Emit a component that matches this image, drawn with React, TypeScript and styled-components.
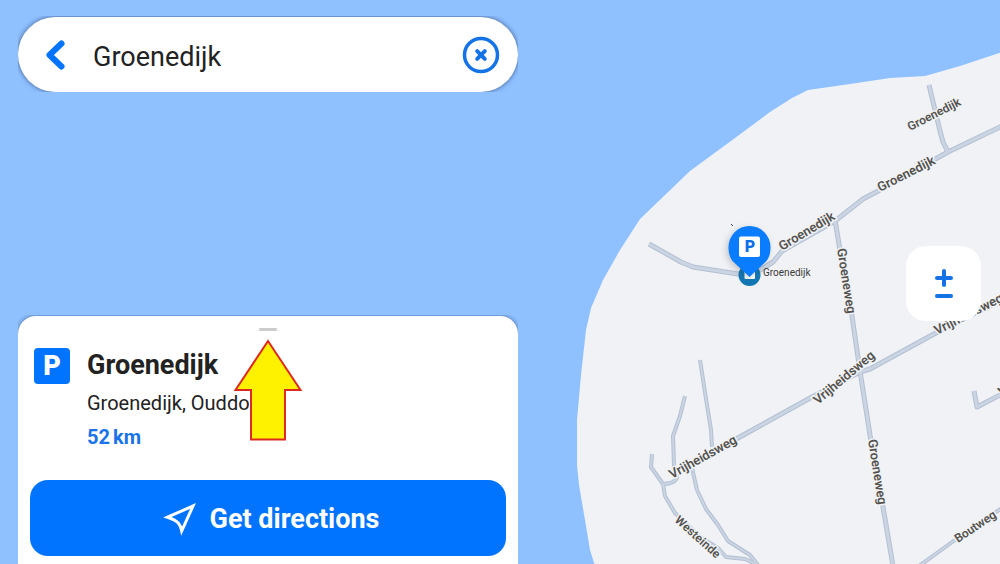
import React, { useState } from "react";
import styled, { createGlobalStyle } from "styled-components";

const BLUE = "#0073ff";
const LAND = "#f0f2f6";

const GlobalStyle = createGlobalStyle`
  * { box-sizing: border-box; }
  body {
    margin: 0;
    background: #8fc0ff;
    color: #222;
    font-family: Roboto, "Noto Sans", sans-serif;
  }
`;

const Screen = styled.main`
  position: relative;
  display: flex;
  justify-content: space-between;
  min-height: 100vh;
  padding: 0 19px 0 18px;
  overflow: hidden;
`;

const MapCanvas = styled.svg`
  position: absolute;
  inset: 0;
  width: 100%;
  height: 100%;
`;

const RoadCasing = styled.path`
  fill: none;
  stroke: #b3c0d3;
  stroke-linejoin: round;
`;

const RoadFill = styled(RoadCasing)`
  stroke: #cbd4e2;
`;

const RoadLabel = styled.text`
  font-weight: 600;
  fill: #55524e;
  stroke: ${LAND};
  stroke-width: 3px;
  stroke-linejoin: round;
  paint-order: stroke;
`;

const PlaceLabel = styled.text`
  font-size: 10px;
  fill: #3a3a3a;
`;

const PinShape = styled.path`
  fill: #0a7cff;
  filter: drop-shadow(-2px 2px 3px rgba(60, 60, 60, 0.25));
`;

const PinLetter = styled.text`
  font-size: 16px;
  font-weight: 900;
  fill: #0a6fe8;
  text-anchor: middle;
`;

const Column = styled.div`
  position: relative;
  display: flex;
  flex-direction: column;
  justify-content: space-between;
  gap: 24px;
  width: 52%;
  max-width: 500px;
  padding-top: 17px;
`;

const SearchBar = styled.form`
  display: flex;
  align-items: center;
  height: 75px;
  padding: 0 18px 0 24px;
  border-radius: 38px;
  background: #fff;
  box-shadow: 0 0 5px rgba(0, 20, 60, 0.6);
  clip-path: inset(-1px 0 0 0);
`;

const IconButton = styled.button`
  display: flex;
  flex: none;
  padding: 0;
  border: 0;
  background: none;
  color: ${BLUE};
  cursor: pointer;
`;

const SearchInput = styled.input`
  flex: 1;
  min-width: 0;
  padding: 4px 0 0;
  margin-left: 23px;
  border: 0;
  outline: 0;
  background: none;
  color: #222;
  font: 400 27px/36px Roboto, "Noto Sans", sans-serif;
`;

const Sheet = styled.section`
  position: relative;
  display: flex;
  flex-direction: column;
  padding: 12px 12px 8px;
  border-radius: 18px 18px 0 0;
  background: #fff;
  box-shadow: 0 0 5px rgba(0, 20, 60, 0.5);
  clip-path: inset(-1px 0 0 0);
`;

const Handle = styled.span`
  align-self: center;
  width: 18px;
  height: 3px;
  border-radius: 1px;
  background: #ccc;
`;

const Place = styled.div`
  display: flex;
  gap: 17px;
  padding: 16px 4px 26px;
`;

const ParkingBadge = styled.span`
  display: flex;
  flex: none;
  align-items: center;
  justify-content: center;
  width: 36px;
  height: 36px;
  margin-top: 1px;
  border-radius: 4px;
  background: ${BLUE};
  color: #fff;
  font-size: 27px;
  font-weight: 900;
`;

const Title = styled.h1`
  margin: 0;
  font-size: 27px;
  font-weight: 700;
  line-height: 36px;
`;

const Address = styled.p`
  margin: 3px 0 0;
  font-size: 20px;
  line-height: 34px;
`;

const Distance = styled.p`
  display: flex;
  gap: 3px;
  margin: 0;
  color: #1a73e8;
  font-size: 20px;
  font-weight: 700;
  line-height: 34px;
`;

const DirectionsButton = styled.button`
  display: flex;
  align-items: center;
  justify-content: center;
  gap: 13px;
  height: 76px;
  padding: 2px 0 0 6px;
  border: 0;
  border-radius: 18px;
  background: ${BLUE};
  color: #fff;
  font: 700 27px/36px Roboto, "Noto Sans", sans-serif;
  cursor: pointer;
`;

const Pointer = styled.svg`
  position: absolute;
  top: 22px;
  left: 50%;
  width: 70px;
  height: 104px;
  transform: translateX(-50%);
  pointer-events: none;
`;

const ZoomButton = styled(IconButton)`
  position: relative;
  align-self: center;
  align-items: center;
  justify-content: center;
  width: 75px;
  height: 75px;
  margin-top: 3px;
  border-radius: 20px;
  background: #fff;
`;

const roads: { d: string; width: number }[] = [
  { d: "M697 490 L706 509 L718 525 L728 541 L750 555 L758 565", width: 4 },
  { d: "M692 468 L697 490", width: 4 },
  { d: "M700 360 L707 405 L711 430 L712 447", width: 4 },
  { d: "M685 396 L680 416 L673 436 L674 465 L677 478 Q674 484 663 484", width: 4 },
  { d: "M652 454 L651 467 L663 484 L665 496 L675 513 L700 537 L718 548 L726 557 L745 559 L758 565", width: 4 },
  { d: "M649 244 L681 262 L693 267 L738 274 L760 270 L773 262 L782 251 L835 221 L863 199 L880 190 L948 152 L1002 126", width: 5 },
  { d: "M929 85 L935 110 L940 131 L943 142 L948 152", width: 5 },
  { d: "M835 220 L840 250 L852 316 L860 371 L870 435 L883 507 L893 566", width: 5 },
  { d: "M690 465 L738 438 L812 397 L860 372 L870 369 L934 334 L1002 300", width: 5 },
  { d: "M974 391 L977 407 L1002 394", width: 5 },
  { d: "M1002 508 L955 540 L919 566", width: 4 },
];

const labels: { text: string; x: number; y: number; angle: number; size: number }[] = [
  { text: "Groenedijk", x: 910, y: 131, angle: -27, size: 12 },
  { text: "Groenedijk", x: 880, y: 192, angle: -27, size: 13 },
  { text: "Groenedijk", x: 782, y: 251, angle: -31, size: 13 },
  { text: "Groeneweg", x: 837, y: 249, angle: 81, size: 13 },
  { text: "Groeneweg", x: 868, y: 440, angle: 81, size: 13 },
  { text: "Vrijheidsweg", x: 818, y: 405, angle: -40, size: 13 },
  { text: "Vrijheidsweg", x: 672, y: 479, angle: -29, size: 13 },
  { text: "Vrijheidsweg", x: 937, y: 335, angle: -27, size: 13 },
  { text: "Westeinde", x: 674, y: 521, angle: 42, size: 12 },
  { text: "Boutweg", x: 958, y: 543, angle: -34, size: 12 },
  { text: "Vrijheidsweg", x: 1001, y: 397, angle: -27, size: 13 },
];

function IslandMap() {
  return (
    <MapCanvas viewBox="0 0 1000 564" preserveAspectRatio="xMaxYMid slice" role="img" aria-label="Map of Groenedijk">
      <path
        d="M1002 52 L960 66 L925 76 L890 78 L850 84 L808 90 L792 98 L770 112 L735 138 L690 171 L665 195 L640 219 L620 250 L603 280 L591 308 L586 330 L581 375 L577 420 L577 465 L579 485 L585 520 L590 550 L595 566 L1002 566 Z"
        fill={LAND}
      />
      {roads.map((r) => (
        <RoadCasing key={r.d} d={r.d} strokeWidth={r.width} />
      ))}
      {roads.map((r) => (
        <RoadFill key={r.d} d={r.d} strokeWidth={r.width - 2} />
      ))}
      {labels.map((l) => (
        <RoadLabel key={`${l.x}-${l.y}`} fontSize={l.size} transform={`translate(${l.x} ${l.y}) rotate(${l.angle})`}>
          {l.text}
        </RoadLabel>
      ))}
      <path d="M731 224 l2 2" stroke="#444" strokeWidth="1" />
      <circle cx="749.5" cy="275" r="11" fill="#1178b5" />
      <rect x="744.5" y="269" width="10.5" height="10" rx="1" fill="#fff" />
      <PlaceLabel x="763" y="276">Groenedijk</PlaceLabel>
      <PinShape d="M749.5 277 L733 261.5 C729.5 257.5 728.5 252 728.5 247 A21 21 0 0 1 770.5 247 C770.5 252 769.5 257.5 766 261.5 Z" />
      <rect x="739" y="236.5" width="21" height="20.5" rx="2" fill="#fff" />
      <PinLetter x="750" y="252">P</PinLetter>
    </MapCanvas>
  );
}

export default function App() {
  const [query, setQuery] = useState("Groenedijk");

  return (
    <>
      <GlobalStyle />
      <Screen>
        <IslandMap />
        <Column>
          <SearchBar role="search" onSubmit={(e) => e.preventDefault()}>
            <IconButton type="button" aria-label="Back">
              <svg width="28" height="36" viewBox="0 0 28 36" fill="none" stroke="currentColor" strokeWidth="6" strokeLinecap="round" strokeLinejoin="round">
                <path d="M19.5 6.5 L7.5 18 L19.5 29.5" />
              </svg>
            </IconButton>
            <SearchInput aria-label="Search" value={query} onChange={(e) => setQuery(e.target.value)} />
            <IconButton type="button" aria-label="Clear search" onClick={() => setQuery("")}>
              <svg width="38" height="38" viewBox="0 0 38 38" fill="none" stroke="#1473e6" strokeLinecap="round">
                <circle cx="19" cy="19" r="16.5" strokeWidth="3.5" />
                <path d="M15.2 15.2 L22.8 22.8 M22.8 15.2 L15.2 22.8" strokeWidth="4" />
              </svg>
            </IconButton>
          </SearchBar>
          <Sheet>
            <Handle />
            <Place>
              <ParkingBadge aria-hidden="true">P</ParkingBadge>
              <div>
                <Title>Groenedijk</Title>
                <Address>Groenedijk, Ouddo</Address>
                <Distance>
                  <span>52</span>
                  <span>km</span>
                </Distance>
              </div>
            </Place>
            <DirectionsButton type="button">
              <svg width="34" height="34" viewBox="0 0 34 34" fill="none" stroke="currentColor" strokeWidth="3" strokeLinejoin="miter">
                <path d="M4.5 15.2 L30 4 L18.7 29 C17.5 23 15.5 18.5 4.5 15.2 Z" />
              </svg>
              Get directions
            </DirectionsButton>
            <Pointer viewBox="0 0 70 104" aria-hidden="true">
              <path d="M35 3 L67.5 52 H52 V101.5 H18 V52 H2.5 Z" fill="#fff200" stroke="#dc2a20" strokeWidth="2" />
            </Pointer>
          </Sheet>
        </Column>
        <ZoomButton type="button" aria-label="Zoom in or out">
          <svg width="20" height="32" viewBox="0 0 20 32" fill="none" stroke="#1473e6" strokeWidth="4" strokeLinecap="round">
            <path d="M10 3 V17 M3 10 H17 M3 28 H17" />
          </svg>
        </ZoomButton>
      </Screen>
    </>
  );
}
